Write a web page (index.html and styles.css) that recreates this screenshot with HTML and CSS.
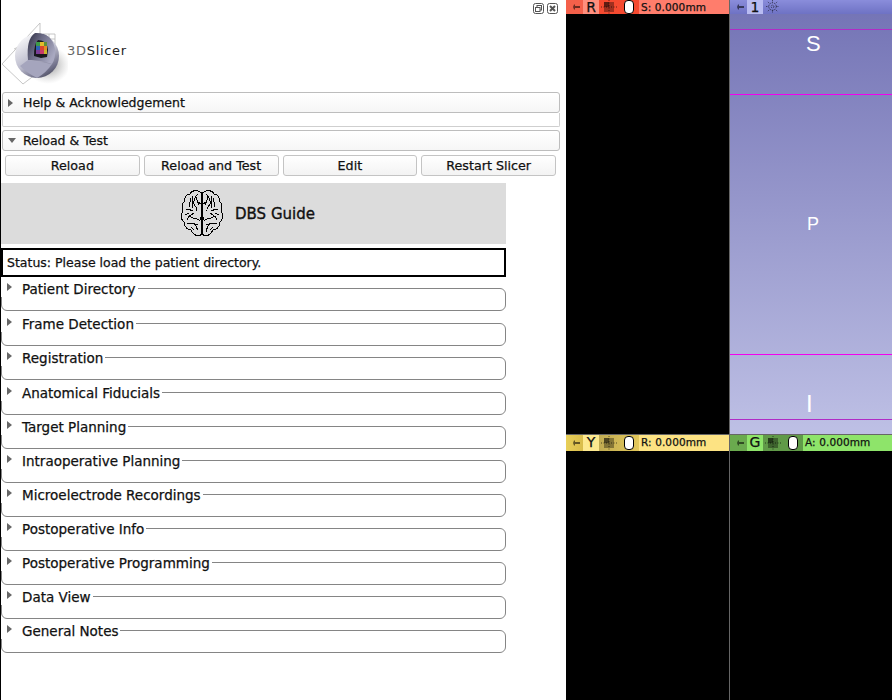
FILE: index.html
```html
<!DOCTYPE html>
<html lang="en">
<head>
<meta charset="utf-8">
<title>DBS Guide</title>
<link rel="stylesheet" href="styles.css">
</head>
<body>
<div class="app">
  <aside class="panel">
    <div class="dock-tools">
      <svg class="dock-icon" viewBox="0 0 11 11"><rect x=".5" y=".5" width="10" height="10" rx="2"/><rect x="4" y="2.500" width="4.500" height="4.500"/><rect x="2.500" y="4.500" width="4.500" height="4" fill="#fff"/></svg>
      <svg class="dock-icon" viewBox="0 0 11 11"><rect x=".5" y=".5" width="10" height="10" rx="2"/><path d="M3 3l5 5M8 3l-5 5" stroke-width="2"/></svg>
    </div>
    <div class="logo">
      <svg class="logo-mark" viewBox="0 0 66 66">
        <defs>
          <linearGradient id="sph" x1=".2" y1=".1" x2=".75" y2="1"><stop offset="0" stop-color="#f2f2f5"/><stop offset=".5" stop-color="#bcbccd"/><stop offset=".85" stop-color="#6f6f88"/><stop offset="1" stop-color="#4a4a5c"/></linearGradient>
          <radialGradient id="shad" cx=".5" cy=".5" r=".5"><stop offset="0" stop-color="#666" stop-opacity=".75"/><stop offset="1" stop-color="#aaa" stop-opacity="0"/></radialGradient>
          <linearGradient id="cut" x1="0" y1="0" x2="1" y2=".6"><stop offset="0" stop-color="#2b2b40"/><stop offset=".45" stop-color="#6c6c86"/><stop offset="1" stop-color="#a8a8c0"/></linearGradient>
        </defs>
        <ellipse cx="46" cy="44" rx="22" ry="19" fill="url(#shad)"/>
        <path d="M0 43L38 2 M0 43l21 20 M21 63L55 37 M38 2v36 M12 28l30-14 M41 13h12v10h-12 M47 13v10 M41 18h12" fill="none" stroke="#b8b8b8" stroke-width=".8"/>
        <circle cx="35" cy="35" r="22" fill="url(#sph)"/>
        <path d="M26 39 Q24 18 33 12 Q50 11 53 28 Q54 37 50 43 L39 40 Z" fill="url(#cut)"/>
        <path d="M32 35 Q32 23 36 19 Q45 19 46 29 L45 36 L39 37 Z" fill="#17171d"/>
        <path d="M26 39 L39 41 L50 43 Q44 52 35 57 Q25 52 18 45 Z" fill="#a5a5bd"/>
        <rect x="34" y="21" width="4" height="4" fill="#3d9a48"/><rect x="38" y="21" width="4" height="4" fill="#e3bc2c"/><rect x="42" y="21" width="3" height="4" fill="#5f8f3a"/>
        <rect x="34" y="25" width="4" height="4" fill="#2f62b4"/><rect x="38" y="25" width="4" height="4" fill="#dc452d"/><rect x="42" y="25" width="3" height="4" fill="#e58b25"/>
        <rect x="34" y="29" width="4" height="4" fill="#7a3d96"/><rect x="38" y="29" width="4" height="4" fill="#c83b6a"/><rect x="42" y="29" width="3" height="4" fill="#c9b52c"/>
      </svg>
      <span class="logo-text"><span class="logo-3d">3D</span>Slicer</span>
    </div>
    <div class="bar"><i class="tri tri-right"></i><span>Help &amp; Acknowledgement</span></div>
    <div class="empty"></div>
    <div class="bar bar-open"><i class="tri tri-down"></i><span>Reload &amp; Test</span></div>
    <div class="buttons">
      <button class="btn">Reload</button>
      <button class="btn">Reload and Test</button>
      <button class="btn">Edit</button>
      <button class="btn">Restart Slicer</button>
    </div>
    <div class="guide">
      <div class="banner">
        <svg class="brain" viewBox="0 0 44 50" fill="none" stroke="#000" stroke-width="1">
          <path d="M21.500 4C18 .5 12 1 10 5 6 5 4 9 5 12 2 14 1 19 3 22 0 25 1 31 4 33 4 38 8 41 11 41 13 46 19 49 21.500 45Z"/>
          <path d="M22.500 4C26 .5 32 1 34 5 38 5 40 9 39 12 42 14 43 19 41 22 44 25 43 31 40 33 40 38 36 41 33 41 31 46 25 49 22.500 45Z"/>
          <path d="M18 5c-3 3-5 6-4 10 1 3 4 3 3 7M10 9c1 3-1 5 0 9M13 7c-2 4 1 8-1 12M6 20c3 0 5 2 7 1M14 24c-3 2-6 3-7 7M10 27c2 3 6 2 9 4 1 1 2-1 2-3M7 35c3-1 5-2 8 0 1 2 3 4 2 8M18 13l3 2M14 36l4-1M17 8c-1 3 1 6 2 8M5 26l4-2M11 38l3 3"/>
          <path d="M26 5c3 3 5 6 4 10-1 3-4 3-3 7M34 9c-1 3 1 5 0 9M31 7c2 4-1 8 1 12M38 20c-3 0-5 2-7 1M30 24c3 2 6 3 7 7M34 27c-2 3-6 2-9 4-1 1-2-1-2-3M37 35c-3-1-5-2-8 0-1 2-3 4-2 8M26 13l-3 2M30 36l-4-1M27 8c1 3-1 6-2 8M39 26l-4-2M33 38l-3 3"/>
        </svg>
        <span class="banner-title">DBS Guide</span>
      </div>
      <div class="status">Status: Please load the patient directory.</div>
      <section class="group"><div class="group-head"><i class="tri tri-right"></i><span>Patient Directory</span></div></section>
      <section class="group"><div class="group-head"><i class="tri tri-right"></i><span>Frame Detection</span></div></section>
      <section class="group"><div class="group-head"><i class="tri tri-right"></i><span>Registration</span></div></section>
      <section class="group"><div class="group-head"><i class="tri tri-right"></i><span>Anatomical Fiducials</span></div></section>
      <section class="group"><div class="group-head"><i class="tri tri-right"></i><span>Target Planning</span></div></section>
      <section class="group"><div class="group-head"><i class="tri tri-right"></i><span>Intraoperative Planning</span></div></section>
      <section class="group"><div class="group-head"><i class="tri tri-right"></i><span>Microelectrode Recordings</span></div></section>
      <section class="group"><div class="group-head"><i class="tri tri-right"></i><span>Postoperative Info</span></div></section>
      <section class="group"><div class="group-head"><i class="tri tri-right"></i><span>Postoperative Programming</span></div></section>
      <section class="group"><div class="group-head"><i class="tri tri-right"></i><span>Data View</span></div></section>
      <section class="group"><div class="group-head"><i class="tri tri-right"></i><span>General Notes</span></div></section>
    </div>
  </aside>
  <main class="views">
    <div class="view">
      <div class="vbar vbar-red">
        <svg class="pin" viewBox="0 0 17 14"><path d="M3 7h4l1-2.500h1V6h5v2H9v1.500H8L7 7z"/></svg>
        <b class="vname">R</b>
        <span class="vtools"><svg class="cross" viewBox="0 0 20 14"><rect x="3" y="2" width="10" height="10"/><rect x="3" y="2" width="5" height="5" class="cross-d"/><path d="M8 0v14M0 7h16"/></svg><i class="oval"></i></span>
        <span class="vval">S: 0.000mm</span>
      </div>
      <div class="black"></div>
    </div>
    <div class="view">
      <div class="vbar vbar-blue">
        <svg class="pin" viewBox="0 0 17 14"><path d="M3 7h4l1-2.500h1V6h5v2H9v1.500H8L7 7z"/></svg>
        <b class="vname">1</b>
        <svg class="gear" viewBox="0 0 14 14"><circle cx="7" cy="7" r="4"/><circle cx="7" cy="7" r="1.500"/><path d="M7 0v3M7 11v3M0 7h3M11 7h3M2 2l2 2M12 2l-2 2M2 12l2-2M12 12l-2-2"/></svg>
      </div>
      <div class="scene">
        <i class="mline mline-dim l1"></i><i class="mline l2"></i><i class="mline l3"></i><i class="mline mline-dim l4"></i>
        <span class="axis ax-s">S</span><span class="axis ax-p">P</span><span class="axis ax-i">I</span>
      </div>
    </div>
    <div class="view">
      <div class="vbar vbar-yellow">
        <svg class="pin" viewBox="0 0 17 14"><path d="M3 7h4l1-2.500h1V6h5v2H9v1.500H8L7 7z"/></svg>
        <b class="vname">Y</b>
        <span class="vtools"><svg class="cross" viewBox="0 0 20 14"><rect x="3" y="2" width="10" height="10"/><rect x="3" y="2" width="5" height="5" class="cross-d"/><path d="M8 0v14M0 7h16"/></svg><i class="oval"></i></span>
        <span class="vval">R: 0.000mm</span>
      </div>
      <div class="black"></div>
    </div>
    <div class="view">
      <div class="vbar vbar-green">
        <svg class="pin" viewBox="0 0 17 14"><path d="M3 7h4l1-2.500h1V6h5v2H9v1.500H8L7 7z"/></svg>
        <b class="vname">G</b>
        <span class="vtools"><svg class="cross" viewBox="0 0 20 14"><rect x="3" y="2" width="10" height="10"/><rect x="3" y="2" width="5" height="5" class="cross-d"/><path d="M8 0v14M0 7h16"/></svg><i class="oval"></i></span>
        <span class="vval">A: 0.000mm</span>
      </div>
      <div class="black"></div>
    </div>
  </main>
</div>
</body>
</html>
```
FILE: styles.css
```css
* { box-sizing: border-box; }
html, body { margin: 0; height: 100%; }
body { font-family: "DejaVu Sans", sans-serif; font-size: 12.500px; color: #111; background: #fff; overflow: hidden; -webkit-text-stroke: .25px #111; }
.app { display: flex; width: 892px; height: 700px; }

.panel { width: 566px; height: 700px; flex: none; border-left: 1px solid #000; background: #fff; padding-top: 3px; }
.dock-tools { display: flex; justify-content: flex-end; gap: 3px; height: 11px; padding-right: 8px; }
.dock-icon { width: 11px; height: 11px; fill: none; stroke: #555; stroke-width: 1; }
.logo { display: flex; align-items: center; height: 67px; margin-top: 6px; padding-left: 1px; }
.logo-mark { width: 66px; height: 66px; flex: none; }
.logo-text { font-size: 13px; letter-spacing: .7px; color: #222; margin: -6px 0 0 -1px; -webkit-text-stroke: 0; }
.logo-3d { color: #666; }

.bar { display: flex; align-items: center; height: 21px; margin: 5px 6px 0 1px; border: 1px solid #bdbdbd; border-radius: 3px; background: linear-gradient(#fff, #f6f6f6); padding-left: 5px; }
.bar span { margin-left: 10px; }
.bar-open { margin-top: 3px; }
.tri { display: block; width: 0; height: 0; flex: none; border-style: solid; border-color: transparent; }
.tri-right { border-width: 4px 0 4px 5px; border-left-color: #666; }
.tri-down { border-width: 5px 4px 0; border-top-color: #666; margin-right: -3px; margin-top: -1px; }
.empty { height: 14px; margin: 0 6px 0 1px; border: 1px solid #cfcfcf; border-top: 0; border-radius: 0 0 2px 2px; }

.buttons { display: flex; gap: 4px; margin: 4px 10px 0 4px; }
.btn { flex: 1 1 0; height: 21px; padding: 0; border: 1px solid #c4c4c4; border-radius: 3px; background: linear-gradient(#fff, #f3f3f3); font: inherit; font-size: 12.700px; color: #111; }

.guide { width: 505px; margin-top: 7px; }
.banner { display: flex; align-items: center; justify-content: center; gap: 11px; height: 61px; background: #dcdcdc; padding-right: 12px; }
.brain { width: 44px; height: 50px; flex: none; shape-rendering: crispEdges; }
.banner-title { font-size: 15px; margin-top: 1px; -webkit-text-stroke: .35px #111; }
.status { height: 29px; margin-top: 4px; border: 2px solid #000; padding: 0 4px; line-height: 25px; }

.group { position: relative; height: 22.500px; margin-top: 11.500px; border: 1px solid #858585; border-radius: 6px; }
.status + .group { margin-top: 11px; }
.group:nth-of-type(2), .group:nth-of-type(4) { margin-top: 12.500px; }
.group-head { position: absolute; top: -9px; left: -1px; display: flex; align-items: center; height: 17px; padding-left: 6px; background: #fff; }
.group-head span { margin-left: 10px; font-size: 13.500px; padding-right: 2px; }
.group-head .tri { margin-top: -4px; }

.views { flex: 1; display: grid; grid-template-columns: 163px 163px; grid-template-rows: 434px 266px; background: #000; }
.view { display: flex; flex-direction: column; min-width: 0; }
.black { flex: 1; background: #000; }
.view:nth-child(even) { border-left: 1px solid #666; }
.view:nth-child(n+3) { border-top: 1px solid #666; }
.vbar { display: flex; align-items: stretch; flex: none; font-size: 10.500px; }
.view:nth-child(-n+2) .vbar { height: 14px; }
.view:nth-child(n+3) .vbar { height: 16px; }
.pin { width: 17px; flex: none; fill: rgba(0,0,0,.55); height: 100%; }
.vname { width: 16px; flex: none; text-align: center; font-weight: 400; font-size: 14px; line-height: 15px; color: #111; }
.vtools { display: flex; align-items: center; width: 40px; flex: none; padding-left: 2px; }
.cross { width: 20px; height: 14px; flex: none; fill: rgba(0,0,0,.35); stroke: none; }
.cross path { fill: none; stroke: rgba(0,0,0,.6); stroke-width: 1; stroke-dasharray: 1 1.500; }
.cross-d { fill: rgba(0,0,0,.4); }
.oval { display: block; width: 10px; height: 14px; margin-left: 3px; border: 1px solid #000; border-radius: 4px; background: #fff; }
.vval { padding-left: 2px; line-height: 15px; white-space: nowrap; color: #111; letter-spacing: .1px; }

.vbar-red { background: #ff7d6c; }
.vbar-red .pin { background: #f4604a; }
.vbar-red .vname { background: #ff8f7e; }
.vbar-red .vtools { background: #f54a30; }
.vbar-blue { background: linear-gradient(#8a8ddb, #6e72c4); }
.vbar-blue .vname { background: #b9bcf2; }
.vbar-yellow { background: #fde383; }
.vbar-yellow .pin { background: linear-gradient(90deg, #e8cf58, #d9bd4c); }
.vbar-yellow .vname { background: #fde98f; }
.vbar-yellow .vtools { background: linear-gradient(90deg, #c0ab52, #e3c85a); }
.vbar-green { background: #8ee46a; }
.vbar-green .pin { background: #6aaa4e; }
.vbar-green .vname { background: #8ee46a; }
.vbar-green .vtools { background: #609a48; }
.gear { width: 13px; height: 13px; margin: 0 0 0 3px; flex: none; fill: none; stroke: rgba(0,0,0,.55); stroke-width: 1; stroke-dasharray: 1.500 1; }

.scene { position: relative; flex: 1; background: linear-gradient(#7575b6, #bec0e5); }
.mline { position: absolute; left: 0; right: 0; height: 1px; background: #f300ee; }
.mline-dim { background: #b02cc6; }
.l1 { top: 15px; }
.l2 { top: 80px; }
.l3 { top: 340px; }
.l4 { top: 405px; }
.axis { position: absolute; color: #fff; font-size: 22px; font-family: "Liberation Sans", sans-serif; line-height: 1; -webkit-text-stroke: 0; }
.ax-s { top: 19px; left: 76px; }
.ax-p { top: 201px; left: 77px; font-size: 18px; }
.ax-i { top: 378px; left: 76px; font-size: 24px; }
```
